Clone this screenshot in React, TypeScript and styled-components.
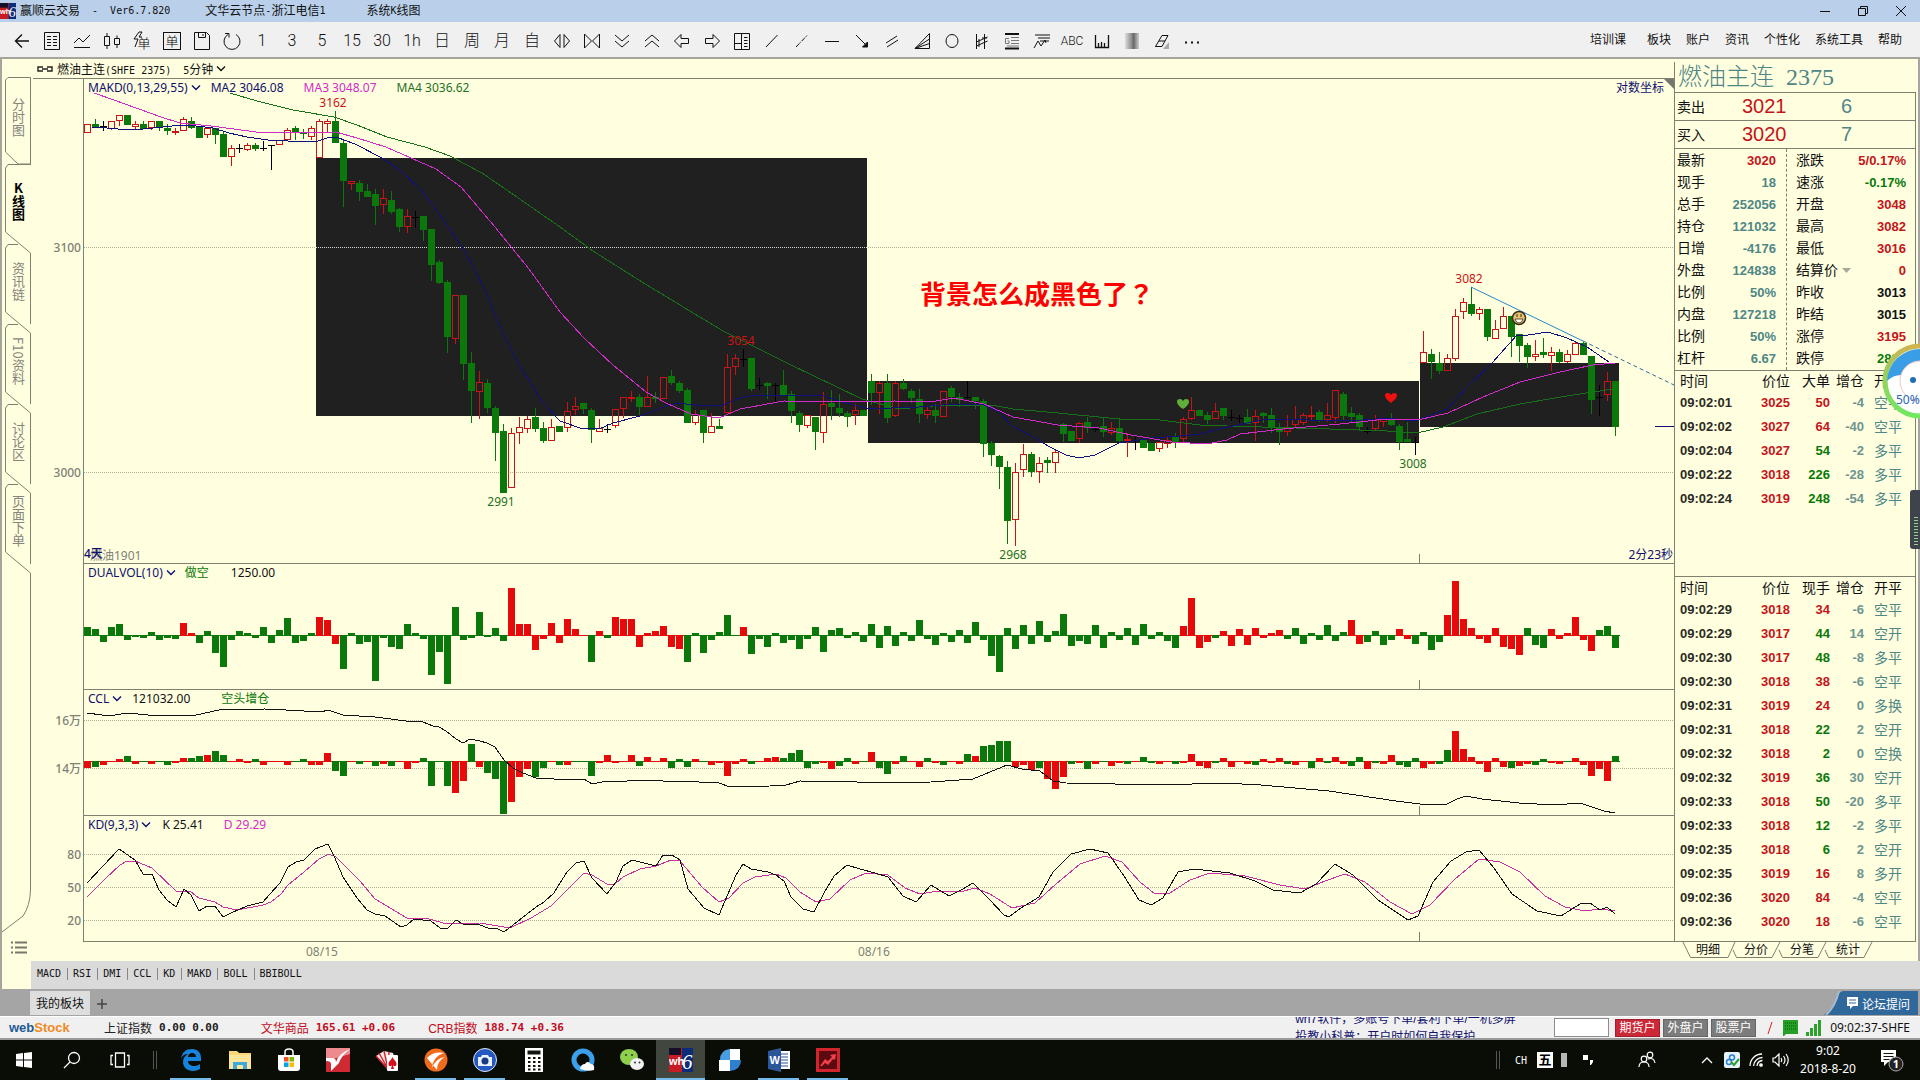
import React from "react";
import styled, { createGlobalStyle, css } from "styled-components";

const cjk = `"Liberation Sans", "Noto Sans CJK SC", sans-serif`;
const ui = `"Noto Sans", "Noto Sans CJK SC", sans-serif`;
const mono = `"DejaVu Sans Mono", "Noto Sans CJK SC", monospace`;

const c = {
  cream: "#ffffdf",
  line: "#808070",
  red: "#c81414",
  green: "#0a780a",
  teal: "#4f8686",
  navy: "#10106e",
  magenta: "#d22cc8",
  grey: "#808078",
};

const GlobalStyle = createGlobalStyle`
  *, *::before, *::after { box-sizing: border-box; }
  body { margin: 0; background: ${c.cream}; font-family: ${cjk}; font-size: 12px; color: #111; }
  button, input { font: inherit; color: inherit; }
  button { border: 0; padding: 0; background: none; cursor: pointer; white-space: nowrap; }
  svg { display: block; flex: none; }
`;

/* ---------- window frame ---------- */

const Window = styled.div`
  display: flex;
  flex-direction: column;
  min-height: 100vh;
  overflow: hidden;
`;

const TitleBar = styled.header`
  display: flex;
  align-items: center;
  height: 22px;
  background: #bad0ea;
`;

const TitleText = styled.span<{ $wide?: boolean }>`
  display: flex;
  align-items: center;
  margin-left: 4px;
  margin-right: ${(p) => (p.$wide ? 37 : 31)}px;
  line-height: 20px;
  white-space: pre;
`;

const Latin = styled.span`
  font-family: ${mono};
  font-size: 10px;
  white-space: pre;
`;

const WindowButtons = styled.div`
  display: flex;
  margin-left: auto;
`;

const WindowButton = styled.button`
  display: grid;
  place-items: center;
  width: 38px;
  height: 22px;
`;

const Toolbar = styled.div`
  display: flex;
  align-items: center;
  height: 37px;
  padding: 2px 18px 0 7px;
  background: #f0f0f0;
  border-bottom: 2px solid #a5a59c;
`;

const ToolButton = styled.button<{ $small?: boolean }>`
  display: grid;
  place-items: center;
  width: 30px;
  height: 30px;
  font-family: Roboto, "Noto Sans CJK SC", sans-serif;
  font-size: ${(p) => (p.$small ? 12 : 16)}px;
  font-weight: 300;
  line-height: 20px;
`;

const Menu = styled.nav`
  display: flex;
  gap: 15px;
  margin-left: auto;
`;

const MenuButton = styled.button<{ $first?: boolean }>`
  line-height: 18px;
  padding-bottom: 2px;
  margin-right: ${(p) => (p.$first ? 6 : 0)}px;
`;

/* ---------- workspace ---------- */

const Workspace = styled.div`
  display: grid;
  grid-template-columns: 29px minmax(0, 1fr) 246px;
  grid-template-rows: auto 28px;
  border-left: 2px solid #a5a59c;
`;

const SideNav = styled.nav`
  grid-row: 1 / 3;
  display: flex;
  flex-direction: column;
  padding: 18px 0 0 3px;
  background: ${c.cream};
`;

const SideTab = styled.button<{ $active?: boolean; $first?: boolean }>`
  position: relative;
  display: flex;
  align-items: center;
  justify-content: center;
  height: ${(p) => (p.$first ? 87 : 80)}px;
  padding-bottom: 6px;
  color: ${(p) => (p.$active ? "#000" : "#85857c")};
  font-weight: ${(p) => (p.$active ? 700 : 400)};
  line-height: 26px;
`;

const SideLabel = styled.span<{ $upright?: boolean }>`
  writing-mode: vertical-rl;
  text-orientation: ${(p) => (p.$upright ? "upright" : "mixed")};
  font-family: "Noto Sans CJK SC", sans-serif;
  font-size: 13px;
  line-height: 26px;
`;

const TabOutline = styled.svg`
  position: absolute;
  left: 0;
  top: 0;
  overflow: visible;
`;

const SideFoot = styled.div`
  display: flex;
  justify-content: center;
  padding: 377px 0 0 2px;
`;

const ChartArea = styled.main`
  display: flex;
  flex-direction: column;
  min-width: 0;
  background: ${c.cream};
`;

const ChartTitle = styled.div`
  display: flex;
  align-items: center;
  gap: 4px;
  height: 19px;
  padding-left: 6px;
`;

const PeriodButton = styled.button`
  display: flex;
  align-items: center;
  gap: 3px;
  margin-left: 8px;
`;

const Panel = styled.section<{ $height: number }>`
  display: grid;
  grid-template-columns: minmax(0, 1fr);
  height: ${(p) => p.$height}px;
  overflow: hidden;
  & > * { grid-area: 1 / 1; }
`;

const PanelHead = styled.div`
  display: flex;
  align-items: center;
  align-self: start;
  height: 18px;
  padding-left: 57px;
  font-family: ${ui};
  white-space: pre;
  z-index: 1;
`;

const IndicatorButton = styled.button`
  display: flex;
  align-items: center;
  gap: 3px;
  color: ${c.navy};
`;

const Reading = styled.span<{ $color: string; $gap: number }>`
  margin-left: ${(p) => p.$gap}px;
  color: ${(p) => p.$color};
`;

const ScaleButton = styled.button`
  margin-left: auto;
  padding-right: 10px;
  color: ${c.navy};
`;

const Plot = styled.svg`
  width: 100%;
  height: 100%;
  font-family: ${ui};
  font-size: 12px;
  polyline { fill: none; shape-rendering: crispEdges; }
`;

const DateAxis = styled.div`
  display: flex;
  height: 19px;
  padding-left: 275px;
  gap: 520px;
  align-items: center;
  color: ${c.grey};
  font-family: ${ui};
`;

/* ---------- quote panel ---------- */

const Quote = styled.aside`
  display: flex;
  flex-direction: column;
  padding-top: 3px;
  padding-right: 4px;
  background: linear-gradient(to left, #a5a5a5 2px, ${c.cream} 2px);
`;

const QuoteTitle = styled.h1`
  display: flex;
  align-items: center;
  gap: 12px;
  height: 30px;
  margin: 0;
  padding-left: 3px;
  border-left: 1px solid ${c.line};
  font-family: "Liberation Serif", "Noto Sans CJK SC", serif;
  font-size: 24px;
  font-weight: 300;
  line-height: 28px;
  color: ${c.teal};
`;

const QuoteBox = styled.div`
  display: flex;
  flex-direction: column;
  border: 1px solid ${c.line};
  border-top: 0;
`;

const BidRow = styled.div`
  display: grid;
  grid-template-columns: 65px 99px 1fr;
  align-items: center;
  height: 28px;
  padding-left: 2px;
  border-top: 1px solid ${c.line};
  font-size: 20px;
`;

const Label = styled.span`
  font-size: 14px;
  line-height: 20px;
`;

const Tint = styled.span<{ $color: string }>`
  color: ${(p) => p.$color};
`;

const StatGrid = styled.div`
  display: grid;
  grid-template-columns: 112px 1fr;
  height: 222px;
  border-top: 1px solid ${c.line};
`;

const StatList = styled.dl<{ $right?: boolean }>`
  display: grid;
  grid-auto-rows: 22px;
  align-content: start;
  margin: 0;
  ${(p) =>
    p.$right
      ? css`padding: 0 9px 0 9px;`
      : css`padding: 0 10px 0 2px; border-right: 1px dashed ${c.line};`}
`;

const Stat = styled.div`
  display: flex;
  align-items: center;
  justify-content: space-between;
`;

const StatName = styled.dt`
  display: flex;
  align-items: center;
  gap: 4px;
  font-size: 14px;
  line-height: 20px;
`;

const StatValue = styled.dd<{ $color: string }>`
  margin: 0;
  color: ${(p) => p.$color};
  font-size: 13px;
  font-weight: 700;
`;

const DealSection = styled.div<{ $height: number }>`
  height: ${(p) => p.$height}px;
  border-top: 1px solid ${c.line};
`;

const DealTable = styled.table<{ $head: number }>`
  width: 100%;
  table-layout: fixed;
  border-collapse: collapse;
  text-align: right;
  th { height: ${(p) => p.$head}px; padding: 0; font-size: 14px; font-weight: 400; line-height: 20px; }
  td { height: 24px; padding: 0; font-size: 13px; font-weight: 700; line-height: 20px; }
  th:first-child, td:first-child { width: 65px; padding-left: 5px; text-align: left; }
  th:nth-child(2) { width: 50px; }
  th:nth-child(3) { width: 40px; }
  th:nth-child(4) { width: 34px; }
  th:last-child, td:last-child { padding-left: 10px; text-align: left; font-size: 14px; font-weight: 400; white-space: nowrap; }
`;

const Cell = styled.td<{ $color: string }>`
  color: ${(p) => p.$color};
`;

const DetailTabs = styled.div`
  display: flex;
  height: 19px;
  padding-left: 9px;
`;

const DetailTab = styled.button`
  position: relative;
  width: 46px;
  height: 16px;
  line-height: 16px;
  &:first-child { width: 50px; }
`;

/* ---------- bottom bars ---------- */

const IndicatorBar = styled.div`
  grid-column: 2 / 4;
  display: flex;
  align-items: center;
  padding: 0 0 2px 6px;
  background: #dadada;
`;

const IndicatorTab = styled.button`
  font-family: ${mono};
  font-size: 10px;
  line-height: 12px;
  padding-right: 6px;
  margin-right: 5px;
  border-right: 1px solid #888;
  &:last-child { border-right: 0; }
`;

const PageTabs = styled.div`
  display: flex;
  align-items: flex-end;
  height: 27px;
  padding-left: 30px;
  background: #a5a5a5;
`;

const PageTab = styled.button`
  width: 60px;
  height: 24px;
  margin-bottom: 1px;
  padding-bottom: 2px;
  background: #dedede;
`;

const AddTab = styled.button`
  width: 24px;
  height: 24px;
  display: grid;
  place-items: center;
`;

const ForumButton = styled.button`
  position: relative;
  display: flex;
  align-items: center;
  justify-content: flex-end;
  gap: 4px;
  width: 94px;
  height: 24px;
  margin: 0 2px 1px auto;
  padding-right: 8px;
  color: #fff;
  z-index: 0;
`;

const ForumShape = styled.svg`
  position: absolute;
  inset: 0;
  z-index: -1;
`;

const StatusBar = styled.div`
  display: flex;
  align-items: center;
  height: 24px;
  padding: 0 10px 0 9px;
  background: #f0f0f0;
  border-top: 1px solid #fff;
  border-bottom: 2px solid #9a9a9a;
`;

const Logo = styled.a`
  display: flex;
  align-items: baseline;
  width: 95px;
  color: #1f5c96;
  font-family: "Liberation Sans", sans-serif;
  font-size: 13px;
  font-weight: 700;
  line-height: 20px;
  text-decoration: none;
  b { color: #f08a24; }
`;

const Index = styled.span<{ $up?: boolean; $gap: number }>`
  display: flex;
  align-items: center;
  gap: 7px;
  margin-right: ${(p) => p.$gap}px;
  color: ${(p) => (p.$up ? "#c00c1c" : "#222")};
  white-space: nowrap;
  b { font-family: ${mono}; font-size: 11px; }
`;

const Ticker = styled.div`
  height: 21px;
  width: 225px;
  margin-left: auto;
  margin-right: 34px;
  overflow: hidden;
  color: ${c.navy};
  line-height: 18px;
  display: flex;
  flex-direction: column;
  justify-content: center;
`;

const TickerLine = styled.a`
  flex: none;
  height: 18px;
  color: inherit;
  text-decoration: none;
  white-space: nowrap;
`;

const Search = styled.input`
  width: 55px;
  height: 19px;
  margin-right: 6px;
  border: 1px solid #8c8c8c;
  background: #fff;
`;

const AccountButton = styled.button<{ $hot?: boolean }>`
  width: 45px;
  height: 18px;
  margin-right: 3px;
  border: 1px solid ${(p) => (p.$hot ? "#a02030" : "#666")};
  background: ${(p) => (p.$hot ? "#cc2838" : "#7c7c7c")};
  color: #fff;
  line-height: 14px;
`;

const StatusIcons = styled.div`
  display: flex;
  align-items: center;
  gap: 8px;
  padding: 0 8px 0 7px;
`;

const ServerTime = styled.span`
  font-family: ${ui};
  font-size: 12px;
`;

const Taskbar = styled.footer`
  display: flex;
  align-items: stretch;
  height: 40px;
  background: #090d06;
  color: #fff;
`;

const TaskButton = styled.button<{ $open?: boolean; $active?: boolean }>`
  position: relative;
  display: grid;
  place-items: center;
  width: 49px;
  height: 40px;
  background: ${(p) => (p.$active ? "#41463f" : "transparent")};
  ${(p) =>
    p.$open &&
    css`
      &::after {
        content: "";
        position: absolute;
        bottom: 0;
        left: ${p.$active ? 0 : 4}px;
        right: ${p.$active ? 0 : 4}px;
        height: 2px;
        background: #76b9ed;
      }
    `}
`;

const SystemButton = styled(TaskButton)`
  width: 48px;
`;

const Grip = styled.span`
  align-self: center;
  width: 4px;
  height: 18px;
  margin: 0 9px;
  border: 1px solid #555;
  border-width: 0 1px;
`;

const Tray = styled.div`
  display: flex;
  align-items: center;
  margin-left: auto;
`;

const TrayItem = styled.button<{ $width: number }>`
  display: grid;
  place-items: center;
  width: ${(p) => p.$width}px;
  height: 40px;
`;

const Wubi = styled.span`
  display: grid;
  place-items: center;
  width: 16px;
  height: 16px;
  background: #fff;
  color: #000;
  font-size: 13px;
  font-weight: 700;
  line-height: 16px;
`;

const Clock = styled.button`
  width: 72px;
  font-family: ${ui};
  font-size: 12px;
  line-height: 18px;
`;

const BallGauge = styled.button`
  position: absolute;
  right: 0;
  top: 343px;
  width: 39px;
  height: 77px;
`;

const SideMeter = styled.div`
  position: absolute;
  right: 0;
  top: 490px;
  width: 10px;
  height: 59px;
  padding: 27px 2px 3px 4px;
  border-radius: 3px 0 0 3px;
  background: #3f434c;
  &::after {
    content: "";
    display: block;
    height: 29px;
    background: repeating-linear-gradient(#8fd48c 0 1px, #3f434c 1px 3px);
  }
`;

/* ---------- drawings ---------- */

const toolIcons: Record<string, React.ReactNode> = {
  back: <path d="M18 11H5M11 4.500L4.500 11l6.500 6.500" strokeWidth="1.400" />,
  list: <path d="M3.500 2.500h15v17h-15zM6 6.500h4M12 6.500h4M6 9.500h4M12 9.500h4M6 12.500h4M12 12.500h4M6 15.500h4M12 15.500h4" />,
  line: <path d="M3 13l5-5 4 4 7-7M3 17.500h16" />,
  candles: <path d="M3.500 6.500h5v9h-5zM6 3v3.500M6 15.500V19M13.500 8.500h5v6h-5zM16 5.500v3M16 14.500V18" />,
  save: <path d="M3.500 2.500h12l3 3v14h-15zM7.500 2.500v5h7v-5M12 4v2" />,
  refresh: <path d="M7 4.500a8 8 0 1 0 8 0M4 3.500h4v4" />,
  shrinkH: <path d="M9 4.500v13L3.500 11zM13 4.500v13L18.500 11z" />,
  bowtie: <path d="M3.500 4v14l7-7zM18.500 4v14l-7-7z" />,
  down: <path d="M4 5l7 6 7-6M4 11l7 6 7-6" />,
  up: <path d="M4 11l7-6 7 6M4 17l7-6 7 6" />,
  left: <path d="M3.500 11L10 4.500v4h7.500v5H10v4z" />,
  right: <path d="M18.500 11L12 4.500v4H4.500v5H12v4z" />,
  layout: <path d="M3.500 3.500h15v16h-15zM10.500 3.500v16M3.500 13.500h7M13 7.500h3.500M13 10.500h3.500M13 13.500h3.500M13 16.500h3.500" />,
  slash: <path d="M5 17L16.500 5" />,
  slashDash: <path d="M5 17L16.500 5" strokeDasharray="5 1 1 1" />,
  hline: <path d="M4 11.500h14" />,
  arrow: <><path d="M5 5l9 9" /><path d="M16.500 17v-5l-5 5z" fill="#111" /></>,
  parallel: <path d="M5 13l11-7M6 17l11-7" />,
  fan: <path d="M4 18.500h14.500v-15zM4 18.500L18.500 9M4 18.500l14.500-5" />,
  circle: <ellipse cx="11" cy="11" rx="6" ry="6.500" />,
  channel: <path d="M5.500 4v15M13.500 4v15M5.500 12l11-5M5.500 16l11-5M8 9v8M16 8h-5" />,
  golden: <><path d="M4 4h14M4 18.500h14" strokeWidth="2" /><path d="M10 7.500h8M10 10.500h8M10 13.500h8M6 16h12M8 8.500H4.500v5H8V11H6.500" stroke="#777" /></>,
  wave: <path d="M4 5h15M7 8h12M9 11h9M3 18l4-7 3 5 4-6 1 3" />,
  measure: <path d="M4.500 5v12.500h13V5M7.500 13v4M10.500 12v5M13.500 13v4" strokeWidth="1.300" />,
  eraser: <><path d="M12 19h6v-7z" fill="#aaa" stroke="none" /><path d="M4.500 16.500L11 5.500h6L11 16.500zM8 11h6M4.500 16.500h6.500" /></>,
  more: <path d="M4 12.500h2M10 12.500h2M16 12.500h2" strokeWidth="2" />,
};

function ToolIcon({ name }: { name: string }) {
  if (name === "gradient") {
    return (
      <svg width="22" height="22" viewBox="0 0 22 22" aria-hidden="true">
        <defs>
          <linearGradient id="bars"><stop offset="0" stopColor="#ddd" /><stop offset=".5" stopColor="#888" /><stop offset=".6" stopColor="#666" /><stop offset="1" stopColor="#ccc" /></linearGradient>
        </defs>
        <rect x="4" y="3" width="14" height="16" fill="url(#bars)" />
      </svg>
    );
  }
  if (name === "flash" || name === "orderBox") {
    return (
      <svg width="22" height="22" viewBox="0 0 22 22" aria-hidden="true" fontSize="13" textAnchor="middle" fontFamily="Noto Sans CJK SC">
        {name === "flash" ? (
          <><path d="M8 2L3 9h4l-3 8M8 2h3L8 7h3" fill="none" stroke="#111" /><text x="13" y="18">单</text></>
        ) : (
          <><rect x="2.500" y="2.500" width="17" height="17" fill="none" stroke="#111" /><text x="11" y="16">单</text></>
        )}
      </svg>
    );
  }
  return (
    <svg width="22" height="22" viewBox="0 0 22 22" fill="none" stroke="#111" aria-hidden="true">
      {toolIcons[name]}
    </svg>
  );
}

const tools: { name: string; text?: string }[] = [
  ..."back list line candles flash orderBox save refresh".split(" ").map((name) => ({ name })),
  ..."1 3 5 15 30 1h 日 周 月 自".split(" ").map((t) => ({ name: t, text: t })),
  ..."shrinkH bowtie down up left right layout slash slashDash hline arrow parallel fan circle channel golden wave".split(" ").map((name) => ({ name })),
  { name: "ABC", text: "ABC" },
  ..."measure gradient eraser more".split(" ").map((name) => ({ name })),
];

const Chevron = () => (
  <svg width="10" height="7" viewBox="0 0 10 7" fill="none" stroke="currentColor" strokeWidth="1.400" aria-hidden="true">
    <path d="M1 1.500L5 5.500l4-4" />
  </svg>
);

/* ---------- chart data ---------- */

type Kind = "r" | "g" | "d";
/* Each row is kind, body top, body bottom, wick top, wick bottom, in thirds of a pixel below the base line. */
const sessions: { base: number; rows: string }[] = [
  {
    base: 70,
    rows: `r163,188,163,188 g163,172,147,175 d168,168,153,183 r154,178,154,180 r136,154,136,168 g136,164,136,164 r163,170,154,178 g163,177,152,178
r154,174,154,180 g154,170,154,183 g175,182,163,194 r182,188,174,194 r148,182,140,182 g154,175,140,178 g168,204,168,204 r175,194,175,203
g175,194,175,222 g192,260,185,260 r235,260,226,288 d235,235,222,248 r226,241,220,243 g226,236,220,243 d235,235,213,243 d226,226,226,300
r211,226,211,226 r181,209,175,213 g175,185,168,209 g187,192,178,207 r174,202,168,210 r154,265,148,265 r154,163,147,188 g154,220,123,220
g219,332,211,412 r333,341,332,359 g339,366,330,393 g364,380,341,382 g373,407,358,465 r385,406,358,431 g390,425,364,433 g418,472,413,485
r439,472,418,490 d440,440,422,475 g439,479,437,512 g478,584,478,633 g577,638,570,643 g636,800,630,848 r676,806,676,822 g676,881,676,930
g880,962,846,1058 r935,967,902,1048 g940,1015,928,1030 g1015,1090,1008,1172 g1084,1268,1062,1268 r1090,1255,1074,1255 r1070,1090,1040,1122
r1048,1076,1037,1090 g1042,1076,1013,1085 g1075,1112,1055,1118 r1070,1112,1047,1112`,
  },
  {
    base: 130,
    rows: `g889,905,889,905 r842,895,815,905 r829,841,800,855 g820,836,820,852 g840,899,834,938 r895,905,868,905 d897,897,882,910 r836,889,836,895
r802,836,802,865 r802,808,782,815 g800,830,792,855 r800,830,739,830 g800,806,787,820 r740,808,740,808 g739,760,720,766 g759,782,754,788
g780,878,773,878 r853,878,840,884 g841,910,841,938 r889,910,850,910 g889,896,866,896 r712,850,672,850 r685,712,673,735 d686,686,658,712
g685,776,685,782 d766,766,745,780 g760,768,755,808 d766,766,760,815 g766,794,720,794 g793,842,782,878 g850,884,842,905 r856,889,856,895
g862,905,860,960 r822,910,787,938 g820,830,780,870 g835,850,792,862 g850,862,842,890 r841,856,822,884 g841,857,841,857 g754,788,733,826
r760,788,752,852 g758,863,732,878 r760,857,752,862 g758,776,747,780 g782,803,776,820 g808,851,776,880 r841,856,830,868 g841,857,822,880
r782,862,782,862 g775,802,767,815 g802,810,790,830 d802,802,754,808 g802,814,800,838 g814,943,808,980 g938,974,932,1007 g979,1012,974,1077
g1012,1172,992,1242 r1027,1171,1000,1248 r973,1021,943,1040 g973,1027,965,1040 r1000,1027,980,1060 g990,1000,982,1028 r965,1000,960,1028
g883,911,878,935 g904,932,904,932 r878,926,876,938 g877,893,860,910 d897,897,890,905 g889,905,860,920 r895,910,876,916 g895,932,865,935
r926,932,910,980 d930,930,920,960 g931,953,931,953 g940,964,940,964 r937,958,937,965 r930,943,922,953 g922,937,910,953 r868,928,862,938
r841,868,800,870`,
  },
  {
    base: 250,
    rows: `g480,497,480,497 g496,510,486,523 r482,508,458,508 g474,498,474,510 d500,500,480,512 d505,505,494,518 g501,521,478,522 r497,520,480,573
g490,498,486,520 g495,530,474,548 g530,546,518,584 r531,545,494,557 r508,525,468,530 r494,520,490,525 r496,502,467,510 g487,510,480,516
r495,510,458,516 r421,503,421,520 g432,498,425,510 g490,500,472,515 g495,532,490,543 d543,543,532,553 r508,537,494,540 r505,515,505,530
g508,525,490,528 g527,577,522,600 g568,577,517,577 d577,577,562,614 r307,340,243,340 g312,335,298,388 g339,362,307,373 r325,362,313,362
r199,326,178,334 r157,185,145,206 g162,191,112,198 r178,191,172,211 g178,260,178,272 r238,266,210,266 r199,238,172,238 g199,260,199,320
g253,287,253,335 g286,320,280,353 r313,320,270,334 g306,314,265,325 r306,318,292,362 g307,335,297,340 r313,335,300,338 r280,314,272,314
g280,314,275,314 g319,449,319,493 d441,441,405,497 r394,434,367,453 g393,530,393,558`,
  },
];

const candles = sessions.flatMap(({ base, rows }) =>
  rows.split(/\s+/).map((row) => {
    const [top, bottom, high, low] = row.slice(1).split(",").map((v) => Math.round(base + Number(v) / 3));
    return { kind: row[0] as Kind, top, bottom, high, low };
  })
);

const barX = (i: number) => 87 + i * 8;

const maFast = "92,127 107,128 118,129 143,129 163,127 181,125 196,126 213,128 229,133 247,137 268,140 288,141 318,141 327,138 336,137 355,144 382,158 400,170 421,190 440,215 464,250 485,290 500,327 518,363 543,403 560,421 580,428 599,429 613,423 640,416 658,409 676,403 695,405 723,405 740,398 756,395 821,395 842,402 866,408 891,408 919,407 952,404 984,405 999,412 1011,425 1033,437 1050,447 1066,455 1079,458 1095,455 1107,449 1119,443 1152,438 1180,436 1200,434 1223,428 1267,419 1350,421 1387,418 1415,421 1447,409 1467,387 1492,363 1517,335 1528,335 1548,332 1567,338 1587,347 1609,362";
const maMid = "94,93 114,100 161,117 180,123 211,126 264,133 336,132 357,138 386,147 411,158 436,169 461,187 495,227 529,269 560,312 584,338 613,365 646,392 666,403 691,414 719,418 740,409 784,401 821,402 895,401 907,402 936,401 954,398 984,404 1013,417 1058,425 1099,428 1131,435 1172,442 1207,444 1227,440 1240,434 1283,429 1340,424 1387,419 1418,420 1448,413 1483,397 1520,382 1560,372 1593,365 1615,363";
const maSlow = "230,93 257,101 293,110 334,117 357,125 387,137 425,147 450,156 482,173 514,195 560,227 593,251 642,282 723,331 789,364 862,399 899,409 944,405 997,406 1013,409 1058,413 1119,419 1160,420 1200,425 1227,426 1330,429 1387,431 1417,433 1443,427 1477,414 1520,404 1567,396 1593,392 1613,389";

/* Signed bar lengths in thirds of a pixel, positive upwards; the letter before each gives its colour. */
const volume = `g25 g19 g-22 g25 g34 g-16 g-7 g-10 g10 g-16 g-10 g-13 r37 r7 g-25 g13 g-55 g-97 g-16 g13 g7 g-10 g25 g-25 g16 g52 g-25 g-19 g7 r55
r46 r-28 g-103 g7 g-28 g-22 g-139 g-10 g-37 g-43 g34 g7 g-13 g-121 g-52 g-148 g85 g-16 g-10 g70 g-7 g22 g-19 r142 r34 r34 r-46 r-13 r37 r-25
r49 r19 r-4 g-82 r13 g-10 r55 r49 r49 r-37 r7 r13 r28 r-37 r-43 g-82 g7 g-55 g-16 g10 g61 g-4 r25 g-58 g-13 g-37 g7 g-25 g-16 g-43
g-13 g25 g-52 g16 g22 g-10 g10 g-22 g34 g-40 g28 g-34 g10 g-19 g46 g-13 g-31 g7 g-22 g16 g-25 g40 g-16 g-64 g-110 g22 g-43 g31 g-28 g43
g-22 g13 g64 g-34 g-19 g-28 g31 g-40 g10 g-16 g22 g-31 g34 g-13 g10 g-19 g-40 r28 r112 r-40 r-22 g-10 r13 r-34 r19 r-31 r22 r-10 r7 r16
g-13 g22 g-28 g7 g-16 g31 g-19 g10 r46 r-28 g-22 g13 g-31 g-16 r19 r-13 g-28 g10 g-46 g-22 r61 r163 r49 r22 r-13 r-25 r22 r-37 r-43 r-61
g22 g-31 g-40 r19 r-13 r7 r55 r-16 r-49 g16 g28 g-40`;

const openInterest = `r-20 g-17 r-13 r-4 r7 g16 r-10 g-4 r-10 g-1 g-13 r-7 r10 g10 g16 r19 g31 g19 r-4 r7 r-7 g7 r-13 r-4 r-1 r-13 g-1 g7 r-13 r-13
r25 g-31 g-46 r-1 g-10 r-4 g-16 r-10 g-16 r-4 r-25 r-7 g10 g-76 g-1 g-76 r-97 r-61 g52 r-19 g-37 g-55 g-160 r-124 r-49 r-25 g-49 g-22 r-1 g-13
r-13 g-1 g-1 g-46 r-7 r19 r-7 r-1 r19 g-16 r13 r-1 r10 g-22 g7 g-19 r7 g-1 r-13 r-7 r-46 r-10 r7 g-10 r-1 r10 r13 g10 g25 g34
g-22 g-10 r-7 r-25 g-16 g10 r-10 g-4 r28 g-22 g-40 r-10 g16 r-4 r-19 g10 r-7 g-13 r-4 r-10 g22 r16 g46 g49 g61 g61 r-19 r-13 r-28 g-22
r-55 r-85 r-49 g-10 r-7 g-25 r-10 g-4 r-16 r-7 g-10 r-4 g13 g-7 r-10 r-4 g-10 r-7 r22 r-16 r-22 g-7 r10 r-19 r-4 r-10 g-13 r7 r-7 r10
g-10 r-13 r-4 g-22 r10 g-7 r13 r-10 g-16 g13 r-25 g-7 r-10 r19 g-13 g-19 g10 r-22 r-10 g-10 g34 r91 r37 r13 r-10 r-34 r10 r-19 g-22 r-16
r-10 g-13 g7 r-7 r-10 g-4 r10 r-13 r-46 r-25 r-61 g16`;

const parseBars = (data: string) =>
  data.split(/\s+/).map((b) => ({ up: b[0] === "r", size: Math.round(Number(b.slice(1)) / 3) })).slice(0, candles.length);

const oiLine = "87,713 102,715 115,715 128,713 148,715 176,716 196,715 219,710 265,709 270,710 278,709 286,710 321,712 328,710 334,712 343,715 375,717 406,721 423,722 433,726 439,727 446,731 456,739 463,743 470,739 480,741 487,743 495,747 504,760 513,768 523,773 536,778 554,779 566,780 584,779 592,784 607,781 622,782 633,780 663,781 673,782 681,781 699,782 719,783 730,787 770,786 786,785 800,781 857,782 890,783 931,782 973,779 1007,765 1022,769 1040,771 1053,781 1066,783 1163,785 1222,783 1261,785 1329,791 1396,801 1420,804 1445,805 1457,799 1466,796 1482,799 1519,803 1555,805 1580,803 1604,811 1615,813";
const kLine = "87,883 119,849 135,860 143,874 152,874 159,890 167,900 176,907 184,889 191,895 199,911 207,906 215,906 223,917 231,913 247,906 263,902 270,894 280,883 288,867 296,862 304,860 315,849 328,844 334,856 343,877 357,898 367,910 375,914 385,916 401,927 407,925 414,919 431,921 440,928 447,929 456,920 463,924 480,925 488,928 496,928 504,932 513,925 536,907 544,902 554,893 560,883 567,872 576,863 584,861 592,878 607,894 616,882 623,866 632,860 640,862 656,866 663,855 672,855 680,860 688,889 704,908 719,915 736,875 743,864 751,869 768,872 776,875 784,881 791,897 803,909 814,912 824,893 834,876 847,865 860,869 875,873 888,877 903,896 916,902 931,885 949,896 961,890 973,883 989,899 1004,915 1009,917 1021,908 1039,897 1053,872 1071,854 1090,849 1108,853 1124,876 1139,900 1151,905 1163,898 1178,872 1194,869 1230,873 1255,881 1273,890 1300,893 1316,884 1335,864 1353,875 1378,900 1408,920 1418,916 1433,882 1451,861 1466,852 1479,850 1494,868 1512,894 1537,911 1561,916 1580,904 1590,903 1600,910 1607,907 1615,914";
const dLine = "87,897 105,879 120,865 127,861 135,861 152,868 176,891 191,892 199,898 215,902 223,907 237,910 263,905 271,902 281,894 288,885 304,872 319,859 329,854 336,857 360,881 375,899 407,918 429,919 447,924 480,923 510,928 531,918 551,906 566,891 584,873 592,875 607,884 615,884 623,877 640,869 656,866 671,860 680,861 702,887 719,902 729,898 743,883 755,877 776,874 786,878 800,892 816,902 830,899 850,880 866,873 888,875 905,888 920,894 938,891 960,892 975,888 990,894 1012,908 1035,903 1056,884 1080,864 1105,856 1122,862 1140,882 1155,894 1170,893 1190,880 1210,873 1245,876 1280,885 1305,889 1325,881 1345,874 1365,882 1390,902 1412,914 1430,905 1455,879 1479,859 1500,862 1520,872 1545,896 1565,907 1585,911 1600,909 1615,911";

/* ---------- chart pieces ---------- */

const GridLine = ({ y, label }: { y: number; label: string }) => (
  <>
    <line x1="84" x2="3000" y1={y + 0.5} y2={y + 0.5} stroke="#b0b094" strokeDasharray="1 1" />
    <text x="81" y={y + 5} textAnchor="end" fill={c.grey} fontWeight="500">{label}</text>
  </>
);

const SessionTick = ({ y }: { y: number }) => <line x1="1419.500" x2="1419.500" y1={y - 9} y2={y} stroke={c.line} />;

function Frame({ top, bottom, children }: { top: number; bottom: number; children: React.ReactNode }) {
  return (
    <Plot role="img" aria-label="K线图">
      <g transform={`translate(-31 ${-top})`}>
        {children}
        <path d={`M${top === 78 ? 33 : 83} ${top}.500H3000M83.500 ${top}V${bottom}`} stroke={c.line} fill="none" />
        <SessionTick y={bottom} />
      </g>
    </Plot>
  );
}

function Bars({ data, zero }: { data: string; zero: number }) {
  return (
    <g>
      {parseBars(data).map(({ up, size }, i) => (
        <g key={i} fill={up ? "#e60a0a" : c.green}>
          <rect x={barX(i) - 3} width="7" y={size > 0 ? zero - size : zero} height={Math.max(1, Math.abs(size))} />
          <rect x={barX(i) - 3} width="8" y={zero} height="1" />
        </g>
      ))}
    </g>
  );
}

function Candles() {
  return (
    <g shapeRendering="crispEdges">
      {candles.map(({ kind, top, bottom, high, low }, i) => {
        const x = barX(i);
        const h = Math.max(1, bottom - top);
        if (kind === "d") return <path key={i} d={`M${x + 0.5} ${high}V${low}M${x - 3} ${top + 0.5}H${x + 4}`} stroke="#000" fill="none" />;
        if (kind === "g")
          return (
            <g key={i} fill={c.green}>
              <rect x={x} y={high} width="1" height={Math.max(1, low - high)} />
              <rect x={x - 3} y={top} width="7" height={h} />
            </g>
          );
        return (
          <path
            key={i}
            d={`M${x + 0.5} ${high}V${top}M${x + 0.5} ${bottom}V${low}M${x - 2.5} ${top + 0.5}h6v${Math.max(1, h - 1)}h-6z`}
            stroke={c.red}
            fill="none"
          />
        );
      })}
    </g>
  );
}

function PriceChart() {
  return (
    <Frame top={78} bottom={563}>
      <g fill="#202020">
        <rect x="316" y="158" width="551" height="258" />
        <rect x="868" y="381" width="551" height="62" />
        <rect x="1420" y="363" width="199" height="64" />
      </g>
      <GridLine y={247} label="3100" />
      <GridLine y={472} label="3000" />
      <line x1="316" x2="867" y1="247.500" y2="247.500" stroke="#d8d8d8" strokeDasharray="1 1" />
      <Candles />
      <polyline points={maSlow} stroke="#187018" />
      <polyline points={maFast} stroke="#10107c" />
      <polyline points={maMid} stroke={c.magenta} />
      <g fill="none">
        <path d="M1471 287L1583 341" stroke="#2a86c8" />
        <path d="M1583 341L1674 385" stroke="#2a6a9a" strokeDasharray="4 3" />
        <path d="M1655 426.500H1674" stroke={c.navy} />
      </g>
      <path d="M1183 409c-8-5-7-10-3-10q2 0 3 2q1-2 3-2c4 0 5 5-3 10z" fill="#5fae3a" />
      <path d="M1391 403c-8-6-7-10-3-10q2 0 3 2q1-2 3-2c4 0 5 4-3 10z" fill="#f01010" />
      <g stroke="#3a2e12">
        <circle cx="1519" cy="318" r="6.500" fill="#e8c474" strokeWidth="1.500" />
        <path d="M1517 314v3M1521 314v3" />
        <path d="M1515 319h8q-1 4-4 4t-4-4z" fill="#fff" strokeWidth=".8" />
      </g>
      <g textAnchor="middle">
        <text x="333" y="107" fill={c.red}>3162</text>
        <text x="741" y="345" fill={c.red}>3054</text>
        <text x="1469" y="283" fill={c.red}>3082</text>
        <g fill="#1f701f">
          <text x="501" y="506">2991</text>
          <text x="1013" y="559">2968</text>
          <text x="1413" y="468">3008</text>
        </g>
      </g>
      <text x="920" y="304" fill="#ff0000" fontSize="26" fontWeight="700">
        背景怎么成黑色了<tspan fontFamily="Noto Sans CJK TC">？</tspan>
      </text>
      <text x="90" y="560" fill={c.grey}>燃油1901</text>
      <text x="84" y="558" fill={c.navy} fontWeight="500">4天</text>
      <text x="1673" y="559" fill={c.navy} textAnchor="end">2分23秒</text>
      <path d="M1664 79h10v10z" fill="#77776f" />
    </Frame>
  );
}

/* ---------- quote data ---------- */

const R = "#c4141c";
const G = "#0a780a";
const T = c.teal;
const K = "#111";

const leftStats = [["最新", "3020", R], ["现手", "18", T], ["总手", "252056", T], ["持仓", "121032", T], ["日增", "-4176", T], ["外盘", "124838", T], ["比例", "50%", T], ["内盘", "127218", T], ["比例", "50%", T], ["杠杆", "6.67", T]];
const rightStats = [["涨跌", "5/0.17%", R], ["速涨", "-0.17%", G], ["开盘", "3048", R], ["最高", "3082", R], ["最低", "3016", R], ["结算价", "0", R], ["昨收", "3013", K], ["昨结", "3015", K], ["涨停", "3195", R], ["跌停", "2835", G]];

const bigDeals = ["01 3025 50 -4 空平 r", "02 3027 64 -40 空平 r", "04 3027 54 -2 多平 g", "22 3018 226 -28 多平 g", "24 3019 248 -54 多平 g"];
const deals = [
  "29 3018 34 -6 空平 r", "29 3017 44 14 空开 g", "30 3017 48 -8 多平 g", "30 3018 38 -6 空平 r", "31 3019 24 0 多换 r", "31 3018 22 2 空开 g", "32 3018 2 0 空换 g",
  "32 3019 36 30 空开 g", "33 3018 50 -20 多平 g", "33 3018 12 -2 多平 g", "35 3018 6 2 空开 g", "35 3019 16 8 多开 r", "36 3020 84 -4 空平 r", "36 3020 18 -6 空平 r",
];

function Deals({ rows, volumeLabel, head }: { rows: string[]; volumeLabel: string; head: number }) {
  return (
    <DealTable $head={head}>
      <thead>
        <tr><th>时间</th><th>价位</th><th>{volumeLabel}</th><th>增仓</th><th>开平</th></tr>
      </thead>
      <tbody>
        {rows.map((row, i) => {
          const [sec, price, vol, change, type, side] = row.split(" ");
          return (
            <tr key={i}>
              <Cell $color="#2b2b24">09:02:{sec}</Cell>
              <Cell $color={R}>{price}</Cell>
              <Cell $color={side === "r" ? R : G}>{vol}</Cell>
              <Cell $color="#6d9490">{change}</Cell>
              <Cell $color={T}>{type}</Cell>
            </tr>
          );
        })}
      </tbody>
    </DealTable>
  );
}

function Stats({ rows, right }: { rows: string[][]; right?: boolean }) {
  return (
    <StatList $right={right}>
      {rows.map(([name, value, color], i) => (
        <Stat key={i}>
          <StatName>
            {name}
            {name === "结算价" && <svg width="9" height="5" aria-hidden="true"><path d="M0 0h9L4.500 5z" fill="#a8a898" /></svg>}
          </StatName>
          <StatValue $color={color}>{value}</StatValue>
        </Stat>
      ))}
    </StatList>
  );
}

const sideTabs = ["分时图", "K线图", "资讯链", "F10资料", "讨论区", "页面下单"];
const outline = (i: number) => {
  if (i === 0) return "M25.500 87V.5H3L.5 3V75L13 87H26";
  const tail = i === 5 ? "M.5 4V68L25.500 89V406Q25 422 18 432L-3 448" : "M.5 4V68L25.500 89";
  return `M${i === 1 ? 26 : 13} .5H3L.5 4${tail}${i > 1 ? "M25.500 9V80" : ""}`;
};

const detailTabs = ["明细", "分价", "分笔", "统计"];

/* ---------- taskbar drawings ---------- */

const WhLogo = ({ size }: { size: number }) => (
  <svg width={size} height={size} viewBox="0 0 24 24" aria-hidden="true">
    <rect width="24" height="24" fill="#0d2c78" />
    <path d="M0 0h13v24H0z" fill="#c81c24" />
    <path d="M0 0h12v7H0z" fill="#15102a" />
    <text x="0" y="17" fontSize="11" fontWeight="700" fill="#fff" fontFamily="Liberation Sans">wh</text>
    <text x="13" y="21" fontSize="21" fontStyle="italic" fill="#fff" fontFamily="Liberation Serif">6</text>
  </svg>
);

const taskIcons: { label: string; open?: boolean; active?: boolean; icon: React.ReactNode }[] = [
  { label: "Edge", open: true, icon: <path d="M2 11C3 4 7 1 13 1c6 0 9 4 9 9v3H9c0 3 3 5 6 5 2 0 4-.5 6-2v5c-2 1-4 2-7 2-6 0-10-4-10-9 0-4 2-6 5-8-4 0-6 2-7 5zM9 9h8c0-3-2-4-4-4s-4 2-4 4z" fill="#1683dc" /> },
  { label: "文件", icon: <><path d="M1 3h8l2 2h12v16H1z" fill="#f8d775" /><path d="M1 7h22v14H1z" fill="#fde69a" /><path d="M5 21v-7h14v7h-4v-4H9v4z" fill="#3fa8dc" /></> },
  { label: "Store", icon: <><path d="M1 7h22v13q0 3-3 3H4q-3 0-3-3z" fill="#fff" /><path d="M8 7V4q0-3 4-3t4 3v3" fill="none" stroke="#fff" strokeWidth="1.500" /><path d="M7 9h4.500v4.500H7z" fill="#f25022" /><path d="M12.500 9H17v4.500h-4.500z" fill="#7fba00" /><path d="M7 14.500h4.500V19H7z" fill="#00a4ef" /><path d="M12.500 14.500H17V19h-4.500z" fill="#ffb900" /></> },
  { label: "行情", icon: <><path d="M0 0h24v24H0z" fill="#cf2a34" /><path d="M0 0h24v6L0 13z" fill="#ee8a8e" /><path d="M0 10h6q4 0 4 4 3-9 14-13-9 7-11 14l-8 8V16q0-3-5-3z" fill="#fff" /></> },
  { label: "扑克", icon: <><path d="M1 8L9 3l9 2 2 6-7 11z" fill="#fbe9ea" /><path d="M1 8l12 13M4 5l9 16M9 3l4 18M14 4l-1 17" stroke="#d0202c" strokeWidth="1.400" /><rect x="12" y="7" width="11" height="16" rx="1" fill="#fff" /><path d="M17.500 9c1 3 4 4 4 7s-3 2.500-3.500 1l1 4h-3l1-4c-.5 1.500-3.500 2-3.500-1s3-4 4-7z" fill="#d0101c" /></> },
  { label: "东方财富", open: true, icon: <><circle cx="12" cy="12" r="11.500" fill="#f26a1c" /><path d="M3 10q7-7 17-5Q9 8 8 20q4-10 13-11-8 4-8 13" fill="#fff" /></> },
  { label: "相机", open: true, icon: <><circle cx="12" cy="12" r="11.500" fill="#2258c0" stroke="#dce8fa" /><path d="M5 9h3l1-2h6l1 2h3v9H5z" fill="#e8f0ff" /><circle cx="12" cy="13" r="3.500" fill="#183a80" /></> },
  { label: "计算器", icon: <><path d="M3 0h18v24H3z" fill="#fff" /><path d="M5.500 2.500h13v4h-13z" fill="#10140e" /><g stroke="#10140e" strokeWidth="2" strokeDasharray="2.500 2.500"><path d="M6 10h13M6 14h13M6 18h13M6 21.500h13" /></g></> },
  { label: "QQ浏览器", icon: <><circle cx="12" cy="12" r="9" fill="none" stroke="#3aa0ec" strokeWidth="5" /><path d="M9 21q1-5 5-5 2-4 6 0 4 0 3 6-6 2-14-1z" fill="#fff" /></> },
  { label: "微信", icon: <><ellipse cx="9" cy="9" rx="9" ry="8" fill="#8ecf4c" /><ellipse cx="17" cy="16" rx="7" ry="6" fill="#f2f2f2" /><g fill="#333"><circle cx="6" cy="7" r="1" /><circle cx="12" cy="7" r="1" /><circle cx="15" cy="14.500" r="1" /><circle cx="19.500" cy="14.500" r="1" /></g></> },
  { label: "赢顺云", open: true, active: true, icon: null },
  { label: "云盘", icon: <><path d="M12 1v11H2Q2 2 12 1z" fill="#4a9ce0" /><path d="M12 1h10v11H12z" fill="#fff" /><path d="M1 12h11v11H1z" fill="#fff" /><path d="M12 12h11q0 10-11 11z" fill="#2f7fd0" /></> },
  { label: "Word", open: true, icon: <><path d="M11 3h12v18H11z" fill="#fff" /><path d="M14 6h7M14 9h7M14 12h7M14 15h7M14 18h7" stroke="#2b579a" /><path d="M1 3l13-3v24L1 21z" fill="#2b579a" /><text x="2.500" y="16" fontSize="11" fontWeight="700" fill="#fff" fontFamily="Liberation Sans">W</text></> },
  { label: "期货", open: true, icon: <><path d="M0 0h24v24H0z" fill="#d0252c" /><path d="M3 3h18v18H3z" fill="#5c0a10" /><path d="M4 18l5-7 3 2 4-4-2-2 6-1-1 6-2-1-5 6-3-2-3 3z" fill="#f0404a" /></> },
];

export default function App() {
  return (
    <Window>
      <GlobalStyle />
      <TitleBar>
        <WhLogo size={16} />
        <TitleText>赢顺云交易<Latin>{"  -  Ver6.7.820"}</Latin></TitleText>
        <TitleText $wide>文华云节点<Latin>-</Latin>浙江电信<Latin>1</Latin></TitleText>
        <TitleText>系统<Latin>K</Latin>线图</TitleText>
        <WindowButtons>
          <WindowButton aria-label="最小化"><svg width="12" height="12"><path d="M1 6.500h10" stroke="#111" /></svg></WindowButton>
          <WindowButton aria-label="还原"><svg width="12" height="12" fill="none" stroke="#111"><path d="M1.500 3.500h7v7h-7zM3.500 3.500v-2h7v7h-2" /></svg></WindowButton>
          <WindowButton aria-label="关闭"><svg width="12" height="12"><path d="M1 1l10 10M11 1L1 11" stroke="#111" /></svg></WindowButton>
        </WindowButtons>
      </TitleBar>

      <Toolbar>
        {tools.map(({ name, text }) => (
          <ToolButton key={name} aria-label={name} $small={text === "ABC"}>{text ?? <ToolIcon name={name} />}</ToolButton>
        ))}
        <Menu>
          {["培训课", "板块", "账户", "资讯", "个性化", "系统工具", "帮助"].map((m, i) => (
            <MenuButton key={m} $first={i === 0}>{m}</MenuButton>
          ))}
        </Menu>
      </Toolbar>

      <Workspace>
        <SideNav>
          {sideTabs.map((label, i) => (
            <SideTab key={label} $active={i === 1} $first={i === 0}>
              <TabOutline width="26" height="80" fill="none" stroke={c.line} aria-hidden="true"><path d={outline(i)} /></TabOutline>
              <SideLabel $upright={i === 1}>{label}</SideLabel>
            </SideTab>
          ))}
          <SideFoot>
            <svg width="16" height="13" stroke="#77776c" strokeWidth="2" aria-hidden="true"><path d="M0 1.500h2M4 1.500h12M0 6.500h2M4 6.500h12M0 11.500h2M4 11.500h12" /></svg>
          </SideFoot>
        </SideNav>

        <ChartArea>
          <ChartTitle>
            <svg width="16" height="8" fill="none" stroke="#222" strokeWidth="1.400" aria-hidden="true"><path d="M6 2H1v4h5M10 2h5v4h-5M5 4h6" /></svg>
            <span>燃油主连<Latin>(SHFE 2375)</Latin></span>
            <PeriodButton><span><Latin>5</Latin>分钟</span><Chevron /></PeriodButton>
          </ChartTitle>
          <Panel $height={485}>
            <PriceChart />
            <PanelHead>
              <IndicatorButton>MAKD(0,13,29,55)<Chevron /></IndicatorButton>
              <Reading $gap={10} $color={c.navy}>MA2 3046.08</Reading>
              <Reading $gap={20} $color={c.magenta}>MA3 3048.07</Reading>
              <Reading $gap={20} $color="#1f701f">MA4 3036.62</Reading>
              <ScaleButton>对数坐标</ScaleButton>
            </PanelHead>
          </Panel>
          <Panel $height={126}>
            <Frame top={563} bottom={689}><Bars data={volume} zero={635} /></Frame>
            <PanelHead>
              <IndicatorButton>DUALVOL(10)<Chevron /></IndicatorButton>
              <Reading $gap={9} $color={G}>做空</Reading>
              <Reading $gap={22} $color={K}>1250.00</Reading>
            </PanelHead>
          </Panel>
          <Panel $height={126}>
            <Frame top={689} bottom={815}>
              <GridLine y={720} label="16万" />
              <GridLine y={768} label="14万" />
              <Bars data={openInterest} zero={761} />
              <polyline points={oiLine} stroke="#111" />
            </Frame>
            <PanelHead>
              <IndicatorButton>CCL<Chevron /></IndicatorButton>
              <Reading $gap={10} $color={K}>121032.00</Reading>
              <Reading $gap={31} $color={G}>空头增仓</Reading>
            </PanelHead>
          </Panel>
          <Panel $height={127}>
            <Frame top={815} bottom={941}>
              <GridLine y={854} label="80" />
              <GridLine y={887} label="50" />
              <GridLine y={920} label="20" />
              <polyline points={dLine} stroke="#c832a0" />
              <polyline points={kLine} stroke="#111" />
              <path d="M83 941.500H3000" stroke={c.line} />
            </Frame>
            <PanelHead>
              <IndicatorButton>KD(9,3,3)<Chevron /></IndicatorButton>
              <Reading $gap={11} $color={K}>K 25.41</Reading>
              <Reading $gap={20} $color={c.magenta}>D 29.29</Reading>
            </PanelHead>
          </Panel>
          <DateAxis><span>08/15</span><span>08/16</span></DateAxis>
        </ChartArea>

        <Quote>
          <QuoteTitle><span>燃油主连</span><span>2375</span></QuoteTitle>
          <QuoteBox>
            <BidRow><Label>卖出</Label><Tint $color={R}>3021</Tint><Tint $color={T}>6</Tint></BidRow>
            <BidRow><Label>买入</Label><Tint $color={R}>3020</Tint><Tint $color={T}>7</Tint></BidRow>
            <StatGrid>
              <Stats rows={leftStats} />
              <Stats rows={rightStats} right />
            </StatGrid>
            <DealSection $height={206}><Deals rows={bigDeals} volumeLabel="大单" head={20} /></DealSection>
            <DealSection $height={365}><Deals rows={deals} volumeLabel="现手" head={21} /></DealSection>
          </QuoteBox>
          <DetailTabs>
            {detailTabs.map((t, i) => (
              <DetailTab key={t}>
                <TabOutline width="46" height="17" fill="none" stroke={c.line} aria-hidden="true">
                  <path d={i === 0 ? "M0 0L7.500 15.500H45L52 0" : "M0 8L3.500 15.500H39L47 0"} />
                </TabOutline>
                {t}
              </DetailTab>
            ))}
          </DetailTabs>
        </Quote>

        <IndicatorBar>
          {["MACD", "RSI", "DMI", "CCL", "KD", "MAKD", "BOLL", "BBIBOLL"].map((t) => <IndicatorTab key={t}>{t}</IndicatorTab>)}
        </IndicatorBar>
      </Workspace>

      <PageTabs>
        <PageTab>我的板块</PageTab>
        <AddTab aria-label="添加"><svg width="10" height="10"><path d="M5 0v10M0 5h10" stroke="#444" strokeWidth="1.500" /></svg></AddTab>
        <ForumButton>
          <ForumShape width="94" height="24" aria-hidden="true"><path d="M19 0h75v24H0q8-6 12-16 2-7 7-8z" fill="#30689c" /><path d="M2 24q9-8 13-24" stroke="#a9bccd" strokeWidth="2" fill="none" /></ForumShape>
          <svg width="11" height="12" aria-hidden="true"><path d="M0 0h11v9H6l-3 3V9H0z" fill="#fff" /><path d="M2 3h7M2 6h7" stroke="#30689c" /></svg>
          论坛提问
        </ForumButton>
      </PageTabs>

      <StatusBar>
        <Logo href="#">web<b>Stock</b></Logo>
        <Index $gap={42}>上证指数<b>0.00 0.00</b></Index>
        <Index $up $gap={33}>文华商品<b>165.61 +0.06</b></Index>
        <Index $up $gap={0}>CRB指数<b>188.74 +0.36</b></Index>
        <Ticker>
          <TickerLine href="#">wh7软件，多账号下单/套利下单/一机多屏</TickerLine>
          <TickerLine href="#">投教小科普：开户时如何自我保护</TickerLine>
        </Ticker>
        <Search aria-label="代码" />
        <AccountButton $hot>期货户</AccountButton>
        <AccountButton>外盘户</AccountButton>
        <AccountButton>股票户</AccountButton>
        <StatusIcons>
          <svg width="9" height="14" aria-hidden="true"><path d="M2 13L6 1" stroke="#e02020" /></svg>
          <svg width="15" height="16" aria-hidden="true"><path d="M0 0h15v14H3l-2 2H0z" fill="#24a024" /><path d="M2 3h11M2 6h11M2 9h11" stroke="#0c500c" strokeDasharray="1 1" /></svg>
          <svg width="16" height="16" fill="#2ea02e" aria-hidden="true"><path d="M0 12h3v4H0zM4 8h3v8H4zM8 4h3v12H8zM12 0h3v16h-3z" /></svg>
        </StatusIcons>
        <ServerTime>09:02:37-SHFE</ServerTime>
      </StatusBar>

      <Taskbar>
        <SystemButton aria-label="开始"><svg width="16" height="16" fill="#fff"><path d="M0 2l7-1v6.500H0zM8 1l8-1v7.500H8zM0 8.500h7V15l-7-1zM8 8.500h8V16l-8-1z" /></svg></SystemButton>
        <SystemButton aria-label="搜索"><svg width="18" height="18" fill="none" stroke="#fff" strokeWidth="1.300"><circle cx="11" cy="7" r="5.500" /><path d="M7 11l-6 6" /></svg></SystemButton>
        <SystemButton aria-label="任务视图"><svg width="20" height="16" fill="none" stroke="#fff" strokeWidth="1.300"><path d="M5.500 1h9v14h-9zM3 3.500H1v9h2M17 3.500h2v9h-2" /></svg></SystemButton>
        <Grip />
        {taskIcons.map(({ label, open, active, icon }) => (
          <TaskButton key={label} aria-label={label} $open={open} $active={active}>
            {icon ? <svg width="24" height="24" viewBox="0 0 24 24" aria-hidden="true">{icon}</svg> : <WhLogo size={24} />}
          </TaskButton>
        ))}
        <Tray>
          <TrayItem $width={22} aria-label="语言栏"><svg width="4" height="18"><path d="M.5 0v18M3.500 0v18" stroke="#555" /></svg></TrayItem>
          <TrayItem $width={24}><Latin>CH</Latin></TrayItem>
          <TrayItem $width={24}><Wubi>五</Wubi></TrayItem>
          <TrayItem $width={14} aria-label="输入法"><svg width="6" height="14"><path d="M0 0h6v14H0z" fill="#b8b8b8" /></svg></TrayItem>
          <TrayItem $width={36} aria-label="标点"><svg width="12" height="10" fill="#fff"><path d="M0 0h5v5H0zM7 5h3v2l-2 3H7z" /></svg></TrayItem>
          <TrayItem $width={80} aria-label="人脉"><svg width="18" height="18" fill="none" stroke="#fff" strokeWidth="1.200"><circle cx="6" cy="8" r="2.800" /><path d="M1 16q0-5 5-5t5 5" /><circle cx="12" cy="4" r="2.800" /><path d="M10 8q6-2 7 4" /></svg></TrayItem>
          <TrayItem $width={8} aria-label="分隔" />
          <TrayItem $width={24} aria-label="显示隐藏的图标"><svg width="12" height="8" fill="none" stroke="#fff" strokeWidth="1.300"><path d="M1 7l5-5 5 5" /></svg></TrayItem>
          <TrayItem $width={25} aria-label="网盘"><svg width="16" height="16"><rect width="16" height="16" rx="2" fill="#e8f2fa" /><circle cx="8" cy="5.500" r="2.500" fill="none" stroke="#2a80d8" strokeWidth="1.500" /><circle cx="5" cy="10" r="2.500" fill="none" stroke="#2a80d8" strokeWidth="1.500" /><path d="M7 10l3 3 5-6" stroke="#2ca02c" strokeWidth="2" fill="none" /></svg></TrayItem>
          <TrayItem $width={24} aria-label="网络"><svg width="15" height="14" fill="none" stroke="#fff" strokeWidth="1.300"><path d="M1 13A12 12 0 0 1 13 1M4.500 13A9 9 0 0 1 13.500 4.500M8 13a6 6 0 0 1 5.500-5.500" /><circle cx="12" cy="12" r="1.200" fill="#fff" /></svg></TrayItem>
          <TrayItem $width={24} aria-label="音量"><svg width="17" height="14" fill="none" stroke="#fff" strokeWidth="1.200"><path d="M1 5h2l4-4v12L3 9H1zM9 5q1.500 2 0 4M11.500 3q3 4 0 8M14 1q4.500 6 0 12" /></svg></TrayItem>
          <Clock>9:02<br />2018-8-20</Clock>
          <TrayItem $width={56} aria-label="通知"><svg width="26" height="26"><path d="M2 3h15v12H9l-4 4v-4H2z" fill="#fff" /><path d="M4.500 6.500h10M4.500 9.500h10M4.500 12.500h6" stroke="#111" /><circle cx="17" cy="17" r="7" fill="#222" stroke="#aaa" /><text x="17" y="21" fontSize="11" fontWeight="700" fill="#fff" textAnchor="middle" fontFamily="Noto Sans">1</text></svg></TrayItem>
        </Tray>
      </Taskbar>

      <BallGauge aria-label="内存占用">
        <svg width="39" height="77" aria-hidden="true">
          <defs><linearGradient id="ring" x1="0" y1="0" x2="0" y2="1"><stop offset="0" stopColor="#d0b450" /><stop offset=".35" stopColor="#9ccc60" /><stop offset="1" stopColor="#70e860" /></linearGradient></defs>
          <circle cx="39" cy="38" r="35" fill="#fff" stroke="url(#ring)" strokeWidth="5" />
          <path d="M6 38A33 33 0 0 1 39 6V18A20 20 0 0 0 20 32Q12 32 6 38z" fill="#3a9ee6" />
          <circle cx="39" cy="38" r="20" fill="none" stroke="#f4c8c0" />
          <circle cx="32" cy="37" r="3" fill="#1e70b4" />
          <text x="15" y="61" fontSize="12" fill="#2a64b4" fontFamily="Noto Sans">50%</text>
        </svg>
      </BallGauge>
      <SideMeter />
    </Window>
  );
}
